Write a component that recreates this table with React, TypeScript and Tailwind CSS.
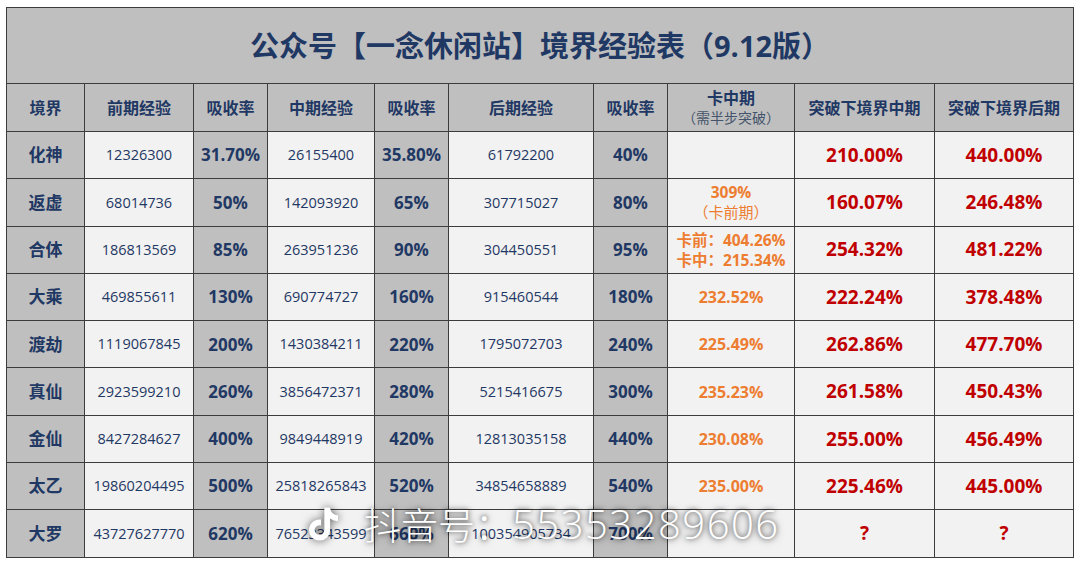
import { FaTiktok } from "react-icons/fa";

type Stuck = string | string[] | null;

interface Row {
  name: string;
  early: string;
  r1: string;
  mid: string;
  r2: string;
  late: string;
  r3: string;
  stuck: Stuck;
  nextMid: string;
  nextLate: string;
}

const rows: Row[] = [
  { name: "化神", early: "12326300", r1: "31.70%", mid: "26155400", r2: "35.80%", late: "61792200", r3: "40%", stuck: null, nextMid: "210.00%", nextLate: "440.00%" },
  { name: "返虚", early: "68014736", r1: "50%", mid: "142093920", r2: "65%", late: "307715027", r3: "80%", stuck: ["309%", "（卡前期）"], nextMid: "160.07%", nextLate: "246.48%" },
  { name: "合体", early: "186813569", r1: "85%", mid: "263951236", r2: "90%", late: "304450551", r3: "95%", stuck: ["卡前：404.26%", "卡中：215.34%"], nextMid: "254.32%", nextLate: "481.22%" },
  { name: "大乘", early: "469855611", r1: "130%", mid: "690774727", r2: "160%", late: "915460544", r3: "180%", stuck: "232.52%", nextMid: "222.24%", nextLate: "378.48%" },
  { name: "渡劫", early: "1119067845", r1: "200%", mid: "1430384211", r2: "220%", late: "1795072703", r3: "240%", stuck: "225.49%", nextMid: "262.86%", nextLate: "477.70%" },
  { name: "真仙", early: "2923599210", r1: "260%", mid: "3856472371", r2: "280%", late: "5215416675", r3: "300%", stuck: "235.23%", nextMid: "261.58%", nextLate: "450.43%" },
  { name: "金仙", early: "8427284627", r1: "400%", mid: "9849448919", r2: "420%", late: "12813035158", r3: "440%", stuck: "230.08%", nextMid: "255.00%", nextLate: "456.49%" },
  { name: "太乙", early: "19860204495", r1: "500%", mid: "25818265843", r2: "520%", late: "34854658889", r3: "540%", stuck: "235.00%", nextMid: "225.46%", nextLate: "445.00%" },
  { name: "大罗", early: "43727627770", r1: "620%", mid: "76523343599", r2: "660%", late: "100354905734", r3: "700%", stuck: null, nextMid: "?", nextLate: "?" },
];

const cell = "border-[1.5px] border-[#3c3c3c] text-center align-middle p-0";
const gray = "bg-[#bfbfbf]";
const light = "bg-[#f2f2f2]";
const num = `${cell} ${light} text-[14.5px] text-[#1f3864]`;
const rate = `${cell} ${gray} text-[17px] font-bold text-[#1f3864]`;
const red = `${cell} ${light} text-[19px] font-bold text-[#c00000]`;
const head = `${cell} ${gray} text-[16px] font-bold text-[#1f3864]`;

function StuckCell({ value }: { value: Stuck }) {
  if (!value) return <td className={`${cell} ${light}`} />;
  if (typeof value === "string")
    return <td className={`${cell} ${light} text-[16px] font-bold text-[#ed7d31]`}>{value}</td>;
  const [a, b] = value;
  const second = b.startsWith("（");
  return (
    <td className={`${cell} ${light} text-[#ed7d31] leading-[20px]`}>
      <div className="text-[15.5px] font-bold">{a}</div>
      <div className={second ? "text-[15px]" : "text-[15.5px] font-bold"}>{b}</div>
    </td>
  );
}

export default function App() {
  return (
    <div className="relative w-[1080px] h-[563px] bg-white font-['Open_Sans','Noto_Sans_CJK_SC',sans-serif]">
      <div className="pl-[6px] pt-[7px]">
        <table className="border-collapse table-fixed w-[1067px]">
          <colgroup>
            <col className="w-[78px]" />
            <col className="w-[109px]" />
            <col className="w-[74px]" />
            <col className="w-[107px]" />
            <col className="w-[74px]" />
            <col className="w-[145px]" />
            <col className="w-[74px]" />
            <col className="w-[127px]" />
            <col className="w-[140px]" />
            <col className="w-[139px]" />
          </colgroup>
          <thead>
            <tr className="h-[76px]">
              <th colSpan={10} className={`${cell} ${gray} text-[29px] font-bold text-[#1f3864]`}>
                公众号【一念休闲站】境界经验表（9.12版）
              </th>
            </tr>
            <tr className="h-[48px]">
              <th className={head}>境界</th>
              <th className={head}>前期经验</th>
              <th className={head}>吸收率</th>
              <th className={head}>中期经验</th>
              <th className={head}>吸收率</th>
              <th className={head}>后期经验</th>
              <th className={head}>吸收率</th>
              <th className={`${head} leading-[19px]`}>
                <div>卡中期</div>
                <div className="text-[14px] font-normal text-[#44546a]">（需半步突破）</div>
              </th>
              <th className={head}>突破下境界中期</th>
              <th className={head}>突破下境界后期</th>
            </tr>
          </thead>
          <tbody>
            {rows.map((r) => (
              <tr key={r.name} className="h-[47.3px]">
                <td className={`${cell} ${gray} text-[17px] font-bold text-[#1f3864]`}>{r.name}</td>
                <td className={num}>{r.early}</td>
                <td className={rate}>{r.r1}</td>
                <td className={num}>{r.mid}</td>
                <td className={rate}>{r.r2}</td>
                <td className={num}>{r.late}</td>
                <td className={rate}>{r.r3}</td>
                <StuckCell value={r.stuck} />
                <td className={red}>{r.nextMid}</td>
                <td className={red}>{r.nextLate}</td>
              </tr>
            ))}
          </tbody>
        </table>
      </div>

      {/* Douyin watermark */}
      <div className="absolute left-[309px] top-[504px] flex items-center text-white [text-shadow:0_0_5px_rgba(0,0,0,0.7),0_1px_10px_rgba(0,0,0,0.4)]">
        <FaTiktok className="w-[29px] h-[34px] [filter:drop-shadow(0_0_4px_rgba(0,0,0,0.65))]" />
        <span className="ml-[26px] text-[37px] leading-none font-light font-['Noto_Sans_CJK_SC',sans-serif]">抖音号：</span>
        <span className="text-[40px] leading-none font-light tracking-[1.5px]">55353289606</span>
      </div>
    </div>
  );
}
